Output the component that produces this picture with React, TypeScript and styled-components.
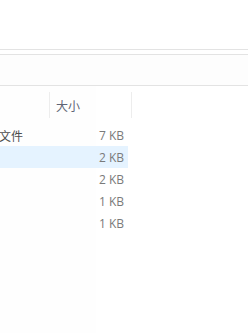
import React from 'react';
import styled, { createGlobalStyle } from 'styled-components';

const GlobalStyle = createGlobalStyle`
  html, body {
    margin: 0;
    padding: 0;
    background: #ffffff;
  }
  body {
    width: 248px;
    height: 333px;
    overflow: hidden;
    font-family: "Open Sans", "Noto Sans CJK SC", sans-serif;
  }
`;

const Window = styled.div`
  width: 248px;
  height: 333px;
  display: flex;
  flex-direction: column;
  background: #ffffff;
`;

const TopArea = styled.div`
  height: 49px;
  border-bottom: 1px solid #e3e3e3;
`;

const Spacer = styled.div`
  height: 4px;
  border-bottom: 1px solid #e3e3e3;
`;

const AddressBand = styled.div`
  height: 30px;
  background: #fdfdfd;
  border-bottom: 1px solid #e3e3e3;
`;

const Body = styled.div`
  flex: 1;
  display: flex;
  flex-direction: column;
  background: linear-gradient(to right, #fefefe 0, #fefefe 96px, #ffffff 96px);
`;

const HeaderRow = styled.div`
  height: 38px;
  display: grid;
  grid-template-columns: 50px 82px 1fr;
  align-items: center;
`;

const HeaderCell = styled.div`
  height: 26px;
  display: flex;
  align-items: center;
  padding-left: 6px;
  border-right: 1px solid #ededed;
  font-family: "Noto Sans CJK SC", sans-serif;
  font-size: 12px;
  color: #5f6475;
`;

const Row = styled.div<{ $selected?: boolean }>`
  width: 128px;
  height: 22px;
  display: flex;
  align-items: center;
  justify-content: space-between;
  background: ${(p) => (p.$selected ? '#e5f3ff' : 'transparent')};
`;

const NameCell = styled.span`
  font-family: "Noto Sans CJK SC", sans-serif;
  font-size: 12px;
  color: #4d4d4d;
  margin-left: -1px;
`;

const SizeCell = styled.span`
  font-family: "Open Sans", sans-serif;
  font-size: 12px;
  color: #7a7a7a;
  padding-right: 4px;
`;

const rows = [
  { name: '文件', size: '7 KB' },
  { name: '', size: '2 KB', selected: true },
  { name: '', size: '2 KB' },
  { name: '', size: '1 KB' },
  { name: '', size: '1 KB' },
];

export default function App() {
  return (
    <Window>
      <GlobalStyle />
      <TopArea />
      <Spacer />
      <AddressBand />
      <Body>
        <HeaderRow>
          <HeaderCell />
          <HeaderCell>大小</HeaderCell>
          <div />
        </HeaderRow>
        {rows.map((r, i) => (
          <Row key={i} $selected={r.selected}>
            <NameCell>{r.name}</NameCell>
            <SizeCell>{r.size}</SizeCell>
          </Row>
        ))}
      </Body>
    </Window>
  );
}
